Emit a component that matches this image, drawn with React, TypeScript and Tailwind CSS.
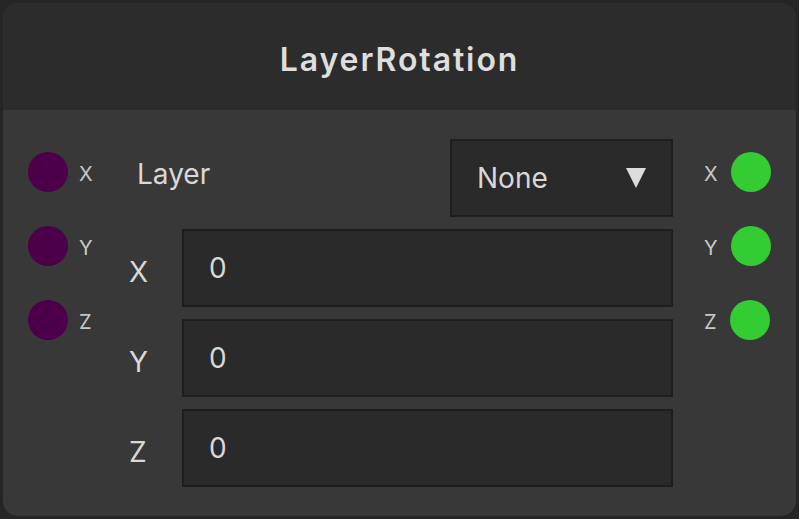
import React from 'react';

type Port = { id: string; label: string };

const inputs: Port[] = [
  { id: 'x', label: 'X' },
  { id: 'y', label: 'Y' },
  { id: 'z', label: 'Z' },
];

const outputs: Port[] = [
  { id: 'x', label: 'X' },
  { id: 'y', label: 'Y' },
  { id: 'z', label: 'Z' },
];

const InputPort: React.FC<{ port: Port }> = ({ port }) => (
  <div className="flex items-center h-10">
    <div className="w-10 h-10 rounded-full bg-[#4b0049]" />
    <span className="ml-[11px] text-[20px] text-[#c8c8c8] pt-[3px]">{port.label}</span>
  </div>
);

const OutputPort: React.FC<{ port: Port }> = ({ port }) => (
  <div className="flex items-center h-10">
    <span className="text-[20px] text-[#c8c8c8] pt-[3px]">{port.label}</span>
    <div className="ml-[13px] w-10 h-10 rounded-full bg-[#33cc33]" />
  </div>
);

const NumberField: React.FC<{ label: string; value: number }> = ({ label, value }) => (
  <div className="flex items-center">
    <span className="w-[53px] text-[28px] text-[#d8d8d8] pt-2">{label}</span>
    <div className="flex-1 h-[78px] flex items-center px-[25px] bg-[#2a2a2a] border-2 border-[#1e1e1e] text-[28px] text-[#d8d8d8]">
      {value}
    </div>
  </div>
);

export default function App() {
  return (
    <div className="w-[799px] h-[519px] bg-[#262626]" style={{ fontFamily: 'Inter, "Noto Sans", sans-serif' }}>
      <div className="w-full h-full rounded-[18px] border-[3px] border-[#252525] bg-[#383838] overflow-hidden flex flex-col">
        {/* title bar */}
        <div className="h-[107px] shrink-0 bg-[#2c2c2c] flex items-center justify-center pt-[6px]">
          <h1 className="text-[32px] font-semibold tracking-[1.9px] text-[#dedede]">LayerRotation</h1>
        </div>

        {/* body */}
        <div className="flex flex-1 pl-[25px]">
          <div className="w-[101px] flex flex-col gap-[34px] pt-[42px]">
            {inputs.map((p) => (
              <InputPort key={p.id} port={p} />
            ))}
          </div>

          <div className="w-[544px] flex flex-col gap-[12px] pt-[29px]">
            <div className="flex items-center justify-between">
              <span className="pl-2 text-[28px] text-[#d8d8d8] -mt-[9px]">Layer</span>
              <div className="w-[223px] h-[78px] flex items-center justify-between pl-[25px] pr-[25px] bg-[#2a2a2a] border-2 border-[#1e1e1e]">
                <span className="text-[28px] text-[#d8d8d8]">None</span>
                <svg width="20" height="20" viewBox="0 0 20 20">
                  <polygon points="0,0 20,0 10,20" fill="#dcdcdc" />
                </svg>
              </div>
            </div>
            <NumberField label="X" value={0} />
            <NumberField label="Y" value={0} />
            <NumberField label="Z" value={0} />
          </div>

          <div className="flex flex-col gap-[34px] pt-[42px] pl-[31px]">
            {outputs.map((p) => (
              <OutputPort key={p.id} port={p} />
            ))}
          </div>
        </div>
      </div>
    </div>
  );
}
